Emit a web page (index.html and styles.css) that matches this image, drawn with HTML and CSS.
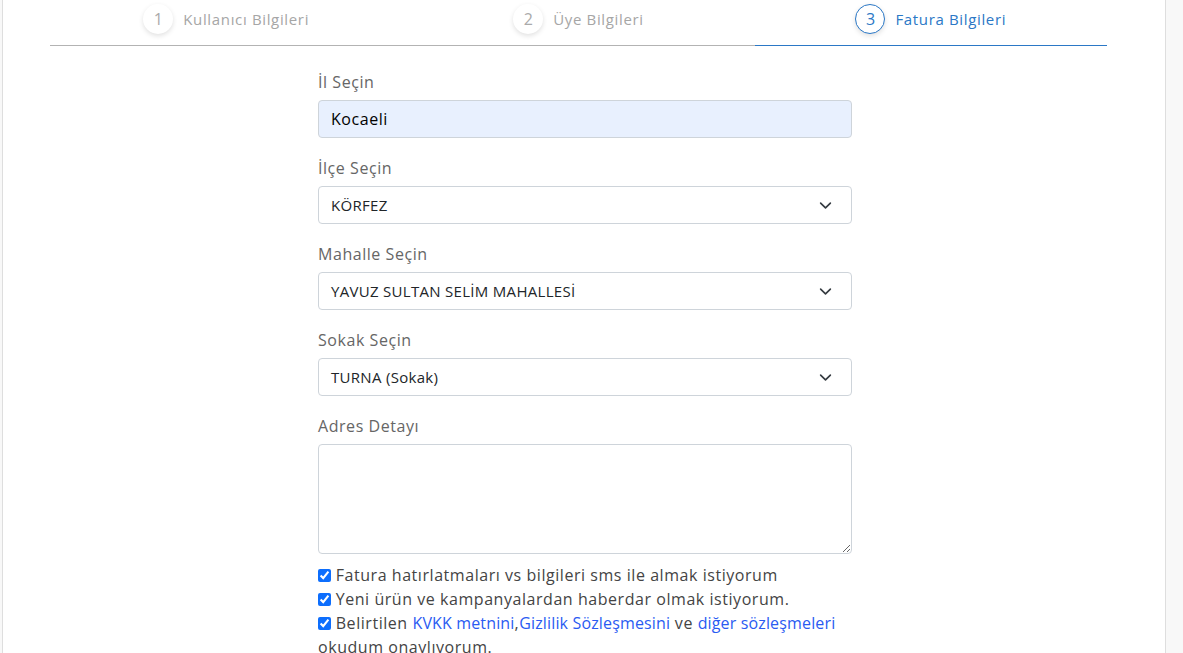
FILE: index.html
```html
<!DOCTYPE html>
<html lang="tr">
<head>
<meta charset="utf-8">
<title>Fatura Bilgileri</title>
<link rel="stylesheet" href="styles.css">
</head>
<body>
<div class="card">
  <div class="steps">
    <div class="step">
      <span class="step-num">1</span>
      <span class="step-title">Kullanıcı Bilgileri</span>
    </div>
    <div class="step">
      <span class="step-num">2</span>
      <span class="step-title">Üye Bilgileri</span>
    </div>
    <div class="step active">
      <span class="step-num">3</span>
      <span class="step-title">Fatura Bilgileri</span>
    </div>
  </div>

  <form class="form">
    <div class="group">
      <label class="label">İl Seçin</label>
      <input class="input autofilled" type="text" value="Kocaeli">
    </div>
    <div class="group">
      <label class="label">İlçe Seçin</label>
      <div class="select"><span>KÖRFEZ</span>
        <svg class="chev" viewBox="0 0 16 16" width="16" height="16"><path d="M2 5l6 6 6-6" fill="none" stroke="#343a40" stroke-width="2" stroke-linecap="round" stroke-linejoin="round"/></svg>
      </div>
    </div>
    <div class="group">
      <label class="label">Mahalle Seçin</label>
      <div class="select"><span>YAVUZ SULTAN SELİM MAHALLESİ</span>
        <svg class="chev" viewBox="0 0 16 16" width="16" height="16"><path d="M2 5l6 6 6-6" fill="none" stroke="#343a40" stroke-width="2" stroke-linecap="round" stroke-linejoin="round"/></svg>
      </div>
    </div>
    <div class="group">
      <label class="label">Sokak Seçin</label>
      <div class="select"><span>TURNA (Sokak)</span>
        <svg class="chev" viewBox="0 0 16 16" width="16" height="16"><path d="M2 5l6 6 6-6" fill="none" stroke="#343a40" stroke-width="2" stroke-linecap="round" stroke-linejoin="round"/></svg>
      </div>
    </div>
    <div class="group">
      <label class="label">Adres Detayı</label>
      <textarea class="textarea"></textarea>
    </div>

    <div class="checks">
      <label class="check"><input type="checkbox" checked> Fatura hatırlatmaları vs bilgileri sms ile almak istiyorum</label>
      <label class="check"><input type="checkbox" checked> Yeni ürün ve kampanyalardan haberdar olmak istiyorum.</label>
      <label class="check"><input type="checkbox" checked> Belirtilen <a href="#">KVKK metnini</a>,<a href="#">Gizlilik Sözleşmesini</a> ve <a href="#">diğer sözleşmeleri</a> okudum onaylıyorum.</label>
    </div>
  </form>
</div>
</body>
</html>
```

FILE: styles.css
```css
html, body {
  margin: 0;
  padding: 0;
}

body {
  background: #f8f8f8;
  font-family: "Open Sans", "Liberation Sans", sans-serif;
  height: 653px;
  overflow: hidden;
}

.card {
  margin-left: 2px;
  width: 1164px;
  min-height: 653px;
  background: #fff;
  border-left: 1px solid #dedede;
  border-right: 1px solid #dedede;
  padding: 4px 58px 0 47px;
  box-sizing: border-box;
}

/* wizard header */
.steps {
  display: flex;
  border-bottom: 1px solid #b3b3b3;
}

.step {
  flex: 1;
  display: flex;
  align-items: center;
  justify-content: center;
  gap: 10px;
  padding-bottom: 11px;
  margin-bottom: -1px;
  border-bottom: 1px solid transparent;
}

.step-num {
  width: 30px;
  height: 30px;
  box-sizing: border-box;
  border-radius: 50%;
  background: #fff;
  box-shadow: 0 2px 5px rgba(0, 0, 0, 0.12);
  display: flex;
  align-items: center;
  justify-content: center;
  font-size: 16px;
  color: #aaa;
}

.step-title {
  font-size: 15px;
  letter-spacing: 0.65px;
  color: #a6a6a6;
}

.step.active {
  border-bottom-color: #2b78c6;
}

.step.active .step-num {
  border: 1px solid #2b78c6;
  color: #2b78c6;
}

.step.active .step-title {
  color: #2b78c6;
}

/* form */
.form {
  width: 534px;
  margin-left: 268px;
  padding-top: 24px;
}

.group {
  display: flex;
  flex-direction: column;
  margin-bottom: 18px;
}

.label {
  font-size: 16px;
  letter-spacing: 0.55px;
  line-height: 24px;
  color: #666;
  margin-bottom: 6px;
}

.input,
.select,
.textarea {
  box-sizing: border-box;
  width: 534px;
  border: 1px solid #ced4da;
  border-radius: 4px;
  background: #fff;
  font-family: "Open Sans", "Liberation Sans", sans-serif;
  color: #212529;
}

.input {
  height: 38px;
  padding: 0 12px;
  font-size: 16px;
  letter-spacing: 0.55px;
  outline: none;
}

.input.autofilled {
  background: #e8f0fe;
  color: #000;
}

.select {
  height: 38px;
  padding: 0 19px 0 12px;
  display: flex;
  align-items: center;
  justify-content: space-between;
  font-size: 15px;
  letter-spacing: 0.3px;
}

.chev {
  width: 13px;
  height: 13px;
}

.textarea {
  height: 110px;
  resize: vertical;
  display: block;
  font-size: 15px;
}

.checks {
  margin-top: -9px;
}

.check {
  display: block;
  font-size: 16px;
  letter-spacing: 0.55px;
  line-height: 24px;
  color: #444;
}

.check input {
  width: 13px;
  height: 13px;
  margin: 0;
  vertical-align: -1px;
  accent-color: #0d6efd;
}

.check a {
  color: #2a5bf2;
  letter-spacing: 0.15px;
  text-decoration: none;
}
```
